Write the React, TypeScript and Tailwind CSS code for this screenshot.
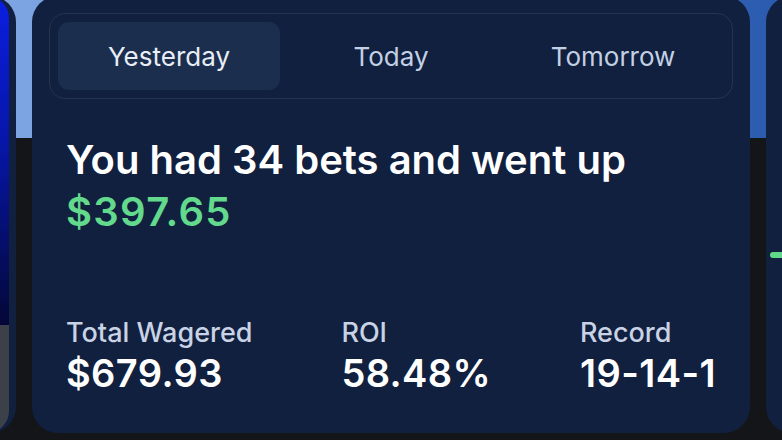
import React, { useState } from 'react';

const tabs = ['Yesterday', 'Today', 'Tomorrow'];

const stats = [
  { label: 'Total Wagered', value: '$679.93' },
  { label: 'ROI', value: '58.48%' },
  { label: 'Record', value: '19-14-1' },
];

function Stat({ label, value }: { label: string; value: string }) {
  return (
    <div className="flex flex-col gap-[2px]">
      <span className="text-[27px] leading-[32px] font-medium text-[#c9d3e5]">{label}</span>
      <span className="text-[38px] leading-[44px] font-semibold text-white tracking-[0.4px]">{value}</span>
    </div>
  );
}

export default function App() {
  const [active, setActive] = useState(0);

  return (
    <div
      className="w-[782px] h-[440px] overflow-hidden bg-[#141519] bg-[linear-gradient(90deg,#7fa5e3,#5a86d0_45%,#2a5aae)] bg-no-repeat bg-[length:100%_138px]"
      style={{ fontFamily: 'Inter, "Noto Sans", sans-serif' }}
    >
      <div className="flex gap-4 -ml-[284px] -mt-[4px]">
        {/* previous card, mostly off screen */}
        <div className="w-[300px] h-[437px] shrink-0 rounded-[26px] bg-[#11203e] pr-[7px] flex flex-col">
          <div className="h-[329px] rounded-tr-[22px] bg-[linear-gradient(180deg,#0b1ee0,#0616a8_45%,#040736)]" />
          <div className="flex-1 rounded-br-[22px] bg-[#3b4049]" />
        </div>

        {/* main card */}
        <div className="w-[718px] h-[437px] shrink-0 rounded-[26px] bg-[#11203e] pt-[17px] flex flex-col">
          <div className="mx-[17px] rounded-[16px] border border-[#22344f] p-[8px] grid grid-cols-3">
            {tabs.map((t, i) => (
              <button
                key={t}
                onClick={() => setActive(i)}
                className={`h-[68px] rounded-[11px] text-[26px] flex items-center justify-center ${
                  active === i ? 'bg-[#1c2e4e] text-[#e8edf6]' : 'text-[#c3d0e4]'
                }`}
              >
                {t}
              </button>
            ))}
          </div>

          <div className="px-[34px] pt-[37px]">
            <p className="text-[40px] leading-[48px] font-semibold text-white">
              You had 34 bets and went up
            </p>
            <p className="mt-[4px] text-[40px] leading-[48px] font-semibold text-[#62d98c] tracking-[1.3px]">
              $397.65
            </p>
          </div>

          <div className="mt-auto mb-[38px] px-[34px] flex justify-between">
            {stats.map((s) => (
              <Stat key={s.label} label={s.label} value={s.value} />
            ))}
          </div>
        </div>

        {/* next card */}
        <div className="w-[300px] h-[437px] shrink-0 rounded-[26px] bg-[#11203e] pt-[256px] pl-[4px]">
          <div className="w-[40px] h-[6px] rounded-full bg-[#5fd88a]" />
        </div>
      </div>
    </div>
  );
}
